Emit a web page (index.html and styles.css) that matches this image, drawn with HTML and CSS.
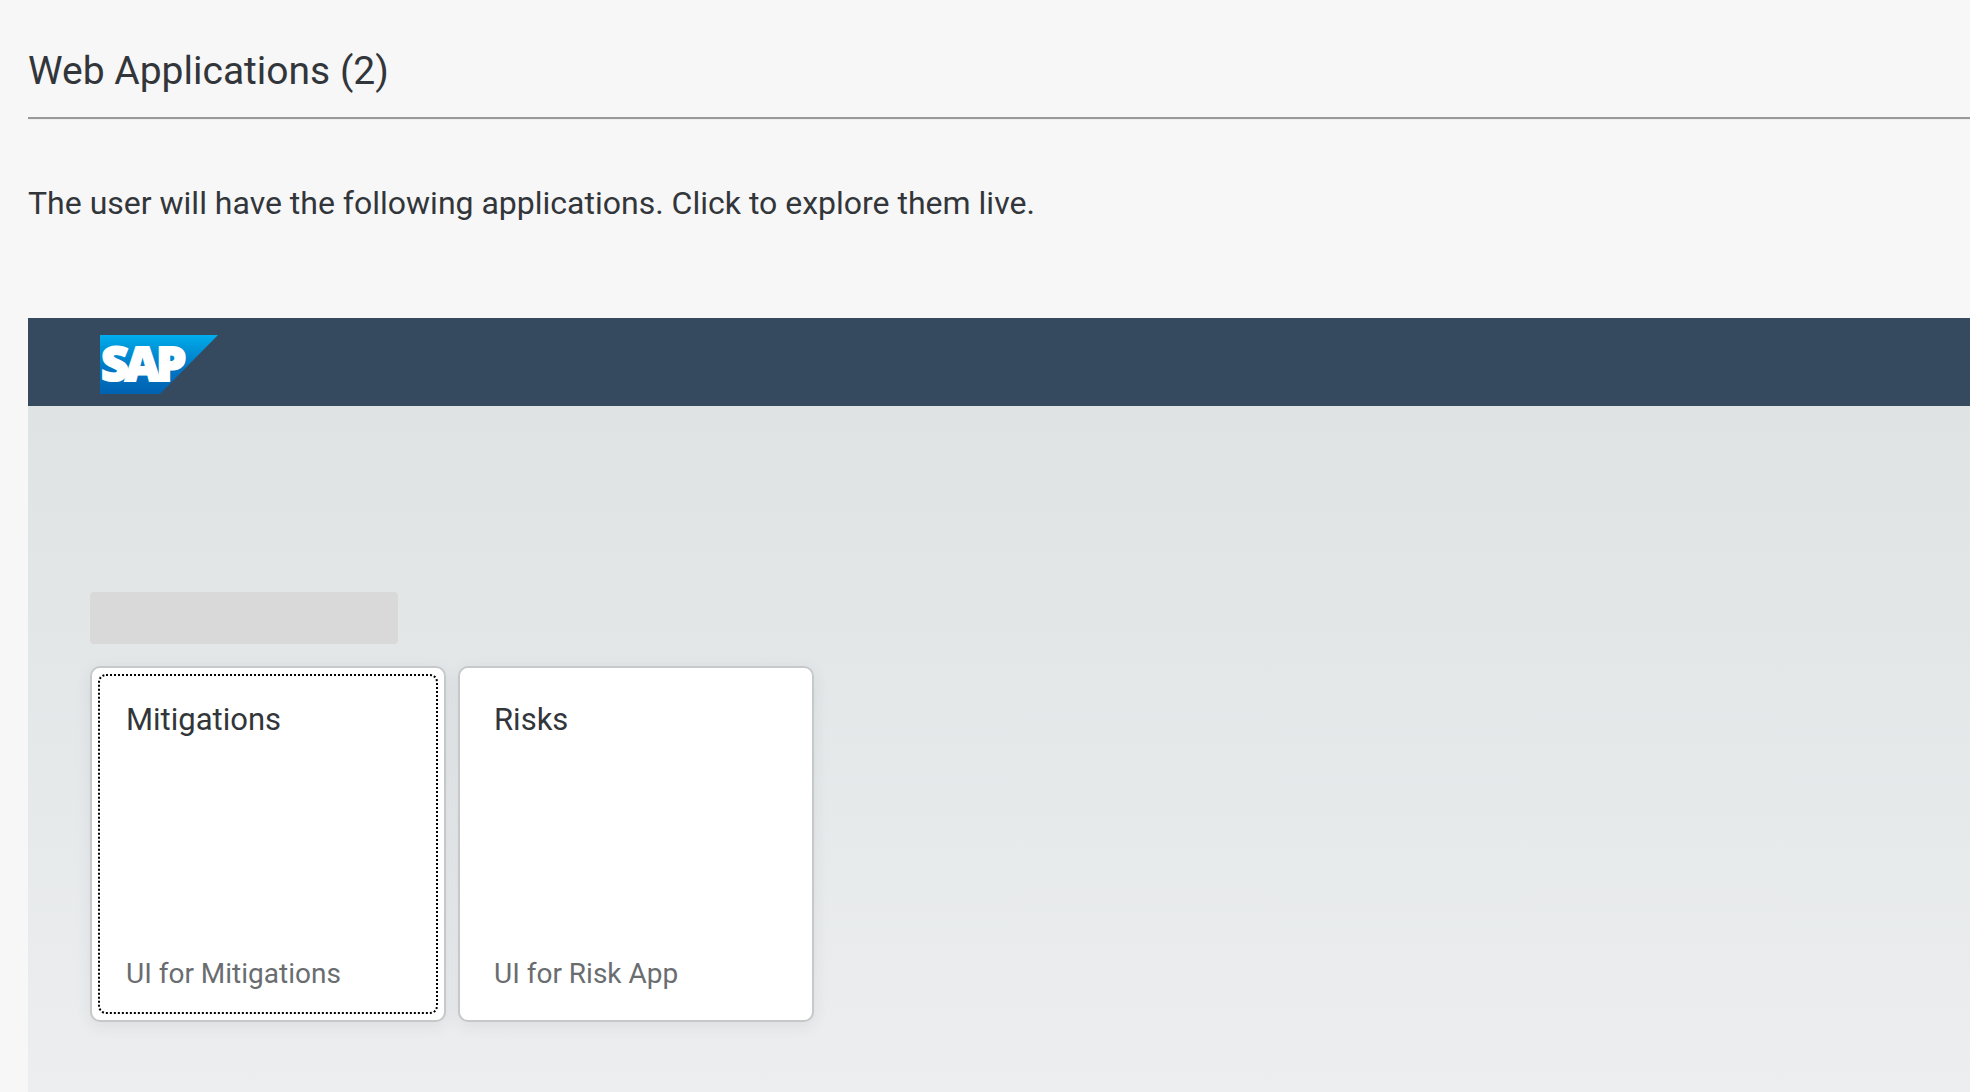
FILE: index.html
```html
<!DOCTYPE html>
<html lang="en">
<head>
  <meta charset="utf-8">
  <meta name="viewport" content="width=device-width, initial-scale=1">
  <title>Web Applications</title>
  <link rel="stylesheet" href="styles.css">
</head>
<body>
  <main class="page">
    <h1 class="page-title">Web Applications (2)</h1>
    <hr class="rule">
    <p class="intro">The user will have the following applications. Click to explore them live.</p>

    <section class="launchpad">
      <header class="shell-bar">
        <svg class="logo" viewBox="0 0 118 59" role="img" aria-label="SAP">
          <defs>
            <linearGradient id="logo-fill" x1="0" y1="0" x2="0" y2="1">
              <stop offset="0" stop-color="#00aeef"/>
              <stop offset="0.2" stop-color="#0099dc"/>
              <stop offset="0.55" stop-color="#0077c5"/>
              <stop offset="1" stop-color="#0062b1"/>
            </linearGradient>
          </defs>
          <path d="M0 0H118L60 59H0Z" fill="url(#logo-fill)"/>
          <text class="logo-text" x="1 25 56" y="46">SAP</text>
        </svg>
      </header>
      <div class="content">
        <div class="group-title"></div>
        <div class="tiles">
          <a class="tile tile-focused" href="#mitigations">
            <span class="tile-title">Mitigations</span>
            <span class="tile-subtitle">UI for Mitigations</span>
          </a>
          <a class="tile" href="#risks">
            <span class="tile-title">Risks</span>
            <span class="tile-subtitle">UI for Risk App</span>
          </a>
        </div>
      </div>
    </section>
  </main>
</body>
</html>
```

FILE: styles.css
```css
* {
  box-sizing: border-box;
}

body {
  margin: 0;
  background: #f7f7f7;
  color: #32363a;
  font-family: Roboto, "Liberation Sans", sans-serif;
}

.page {
  display: flex;
  flex-direction: column;
  min-height: 100vh;
  padding: 47px 0 0 28px;
}

.page-title {
  margin: 0;
  font-size: 39px;
  line-height: 48px;
  font-weight: 400;
}

.rule {
  width: 100%;
  height: 3px;
  margin: 22px 0 0;
  border: 0;
  border-top: 2px solid #999;
  border-bottom: 1px solid #eee;
}

.intro {
  margin: 63px 0 0;
  font-size: 32px;
  line-height: 40px;
}

.launchpad {
  display: flex;
  flex: 1;
  flex-direction: column;
  margin-top: 95px;
}

.shell-bar {
  display: flex;
  align-items: center;
  height: 88px;
  padding: 4px 72px 0;
  background: #354a5f;
}

.logo {
  width: 118px;
  height: 59px;
  overflow: visible;
}

.logo-text {
  fill: #fff;
  stroke: #fff;
  stroke-width: 2px;
  font-family: "Open Sans", sans-serif;
  font-size: 48px;
  font-weight: 800;
}

.content {
  flex: 1;
  padding: 186px 62px 70px;
  background: linear-gradient(to bottom, #dfe3e4, #eceef0);
}

.group-title {
  width: 308px;
  height: 52px;
  border-radius: 4px;
  background: #d9d9d9;
}

.tiles {
  display: flex;
  flex-wrap: wrap;
  gap: 12px;
  margin-top: 22px;
}

.tile {
  position: relative;
  display: flex;
  flex-direction: column;
  justify-content: space-between;
  width: 356px;
  height: 356px;
  padding: 32px 34px 30px;
  border: 2px solid #c6c9c9;
  border-radius: 10px;
  background: #fff;
  box-shadow: 0 4px 16px rgba(50, 54, 58, 0.08);
  color: inherit;
  text-decoration: none;
}

/* Dotted focus ring inside the tile */
.tile-focused::after {
  content: "";
  position: absolute;
  inset: 6px;
  border: 2px dotted #000;
  border-radius: 8px;
}

.tile-title {
  font-size: 31px;
  line-height: 40px;
}

.tile-subtitle {
  color: #6a6d70;
  font-size: 28px;
  line-height: 32px;
}
```
